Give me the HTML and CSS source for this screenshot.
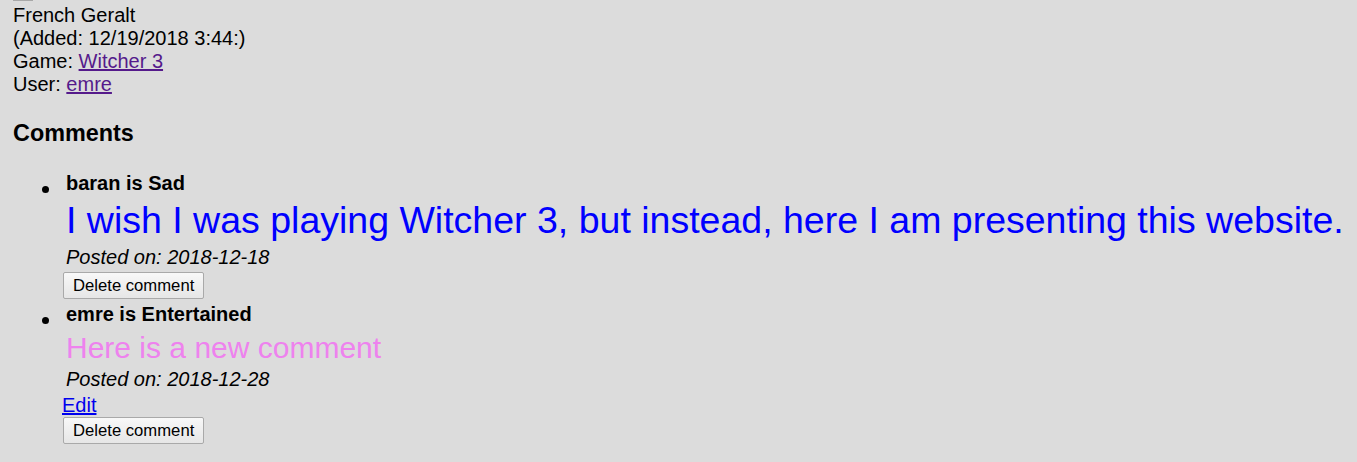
FILE: index.html
```html
<!DOCTYPE html>
<html lang="en">
<head>
<meta charset="utf-8">
<title>French Geralt</title>
<link rel="stylesheet" href="styles.css">
</head>
<body>
<div class="thumb"></div>
<div class="info">
  <div>French Geralt</div>
  <div>(Added: 12/19/2018 3:44:)</div>
  <div>Game: <a class="visited" href="#">Witcher 3</a></div>
  <div>User: <a class="visited" href="#">emre</a></div>
</div>
<h3 class="comments-title">Comments</h3>
<ul class="comment-list">
  <li class="comment">
    <div class="c-author">baran is Sad</div>
    <div class="c-text c-big c-blue">I wish I was playing Witcher 3, but instead, here I am presenting this website.</div>
    <div class="c-date">Posted on: 2018-12-18</div>
    <button class="btn" type="button">Delete comment</button>
  </li>
  <li class="comment">
    <div class="c-author">emre is Entertained</div>
    <div class="c-text c-mid c-violet">Here is a new comment</div>
    <div class="c-date c-date-tight">Posted on: 2018-12-28</div>
    <a class="edit" href="#">Edit</a>
    <button class="btn btn-tight" type="button">Delete comment</button>
  </li>
</ul>
</body>
</html>
```

FILE: styles.css
```css
html {
  background: #dcdcdc;
}
body {
  margin: 0 0 0 12px;
  font-family: "Liberation Sans", Arial, sans-serif;
  font-size: 20px;
  color: #000;
}
.thumb {
  width: 20px;
  height: 1px;
  margin: 0 0 3px 1px;
  background: #a8a8a8;
}
.info {
  padding-left: 1px;
  line-height: 23px;
}
a {
  color: #0000ee;
}
a.visited {
  color: #551a8b;
}
.comments-title {
  padding-left: 1px;
  font-size: 23.4px;
  font-weight: bold;
  margin: 24.4px 0 24.3px;
}
.comment-list {
  margin: 0;
  padding: 0 0 0 50px;
  list-style: none;
}
.comment {
  position: relative;
}
.comment + .comment {
  margin-top: 4px;
}
.comment::before {
  content: "";
  position: absolute;
  left: -20px;
  top: 14px;
  width: 7px;
  height: 7px;
  border-radius: 50%;
  background: #000;
}
.c-author {
  padding-left: 4px;
  font-weight: bold;
  line-height: 23px;
}
.c-text {
  padding-left: 4px;
  margin-top: 4px;
  line-height: 1.15;
}
.c-big {
  font-size: 37.5px;
}
.c-mid {
  font-size: 30px;
  margin-top: 5px;
}
.c-blue {
  color: #0000ff;
}
.c-violet {
  color: #ee82ee;
}
.c-date {
  padding-left: 4px;
  margin-top: 4px;
  font-style: italic;
  line-height: 23px;
}
.c-date-tight {
  margin-top: 3px;
}
.edit {
  display: block;
  width: max-content;
  margin-top: 2.5px;
  line-height: 23px;
}
.btn {
  display: block;
  margin: 3px 0 0 1px;
  padding: 3px 9px;
  font-family: "Liberation Sans", Arial, sans-serif;
  font-size: 16.67px;
  line-height: 19px;
  color: #000;
  background: linear-gradient(#f8f8f8, #e6e6e6);
  border: 1px solid #a9a9a9;
  border-radius: 2px;
}
.btn-tight {
  margin-top: 0;
}
```
